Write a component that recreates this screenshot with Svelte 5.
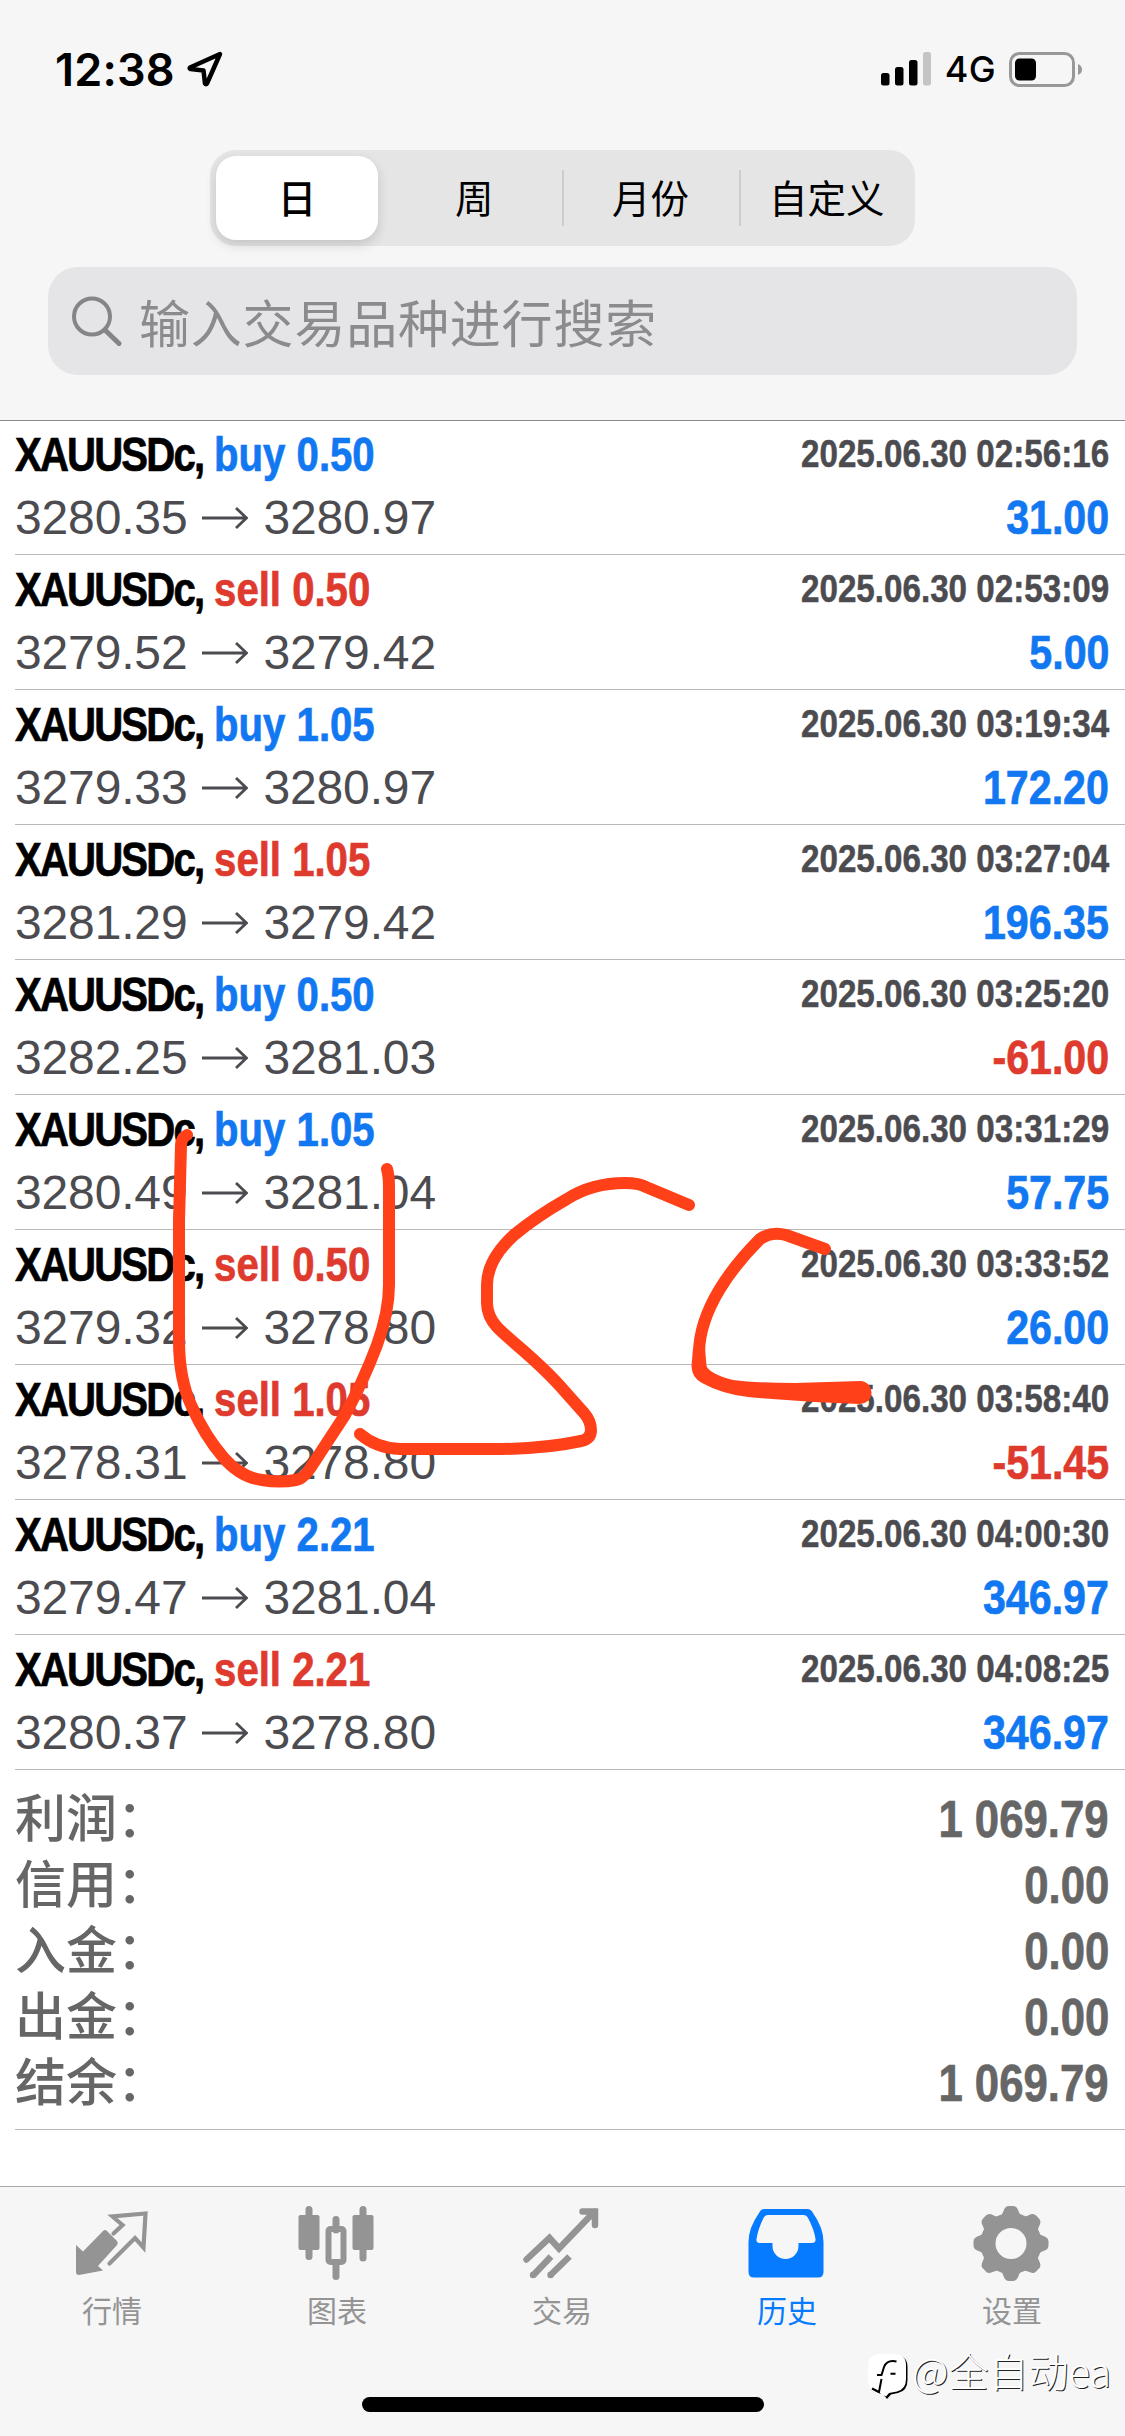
<script lang="ts">
	type Deal = {
		side: 'buy' | 'sell';
		volume: string;
		open: string;
		close: string;
		time: string;
		profit: string;
	};

	const periods = ['日', '周', '月份', '自定义'];
	let period = $state('日');

	const deals: Deal[] = [
		{ side: 'buy', volume: '0.50', open: '3280.35', close: '3280.97', time: '02:56:16', profit: '31.00' },
		{ side: 'sell', volume: '0.50', open: '3279.52', close: '3279.42', time: '02:53:09', profit: '5.00' },
		{ side: 'buy', volume: '1.05', open: '3279.33', close: '3280.97', time: '03:19:34', profit: '172.20' },
		{ side: 'sell', volume: '1.05', open: '3281.29', close: '3279.42', time: '03:27:04', profit: '196.35' },
		{ side: 'buy', volume: '0.50', open: '3282.25', close: '3281.03', time: '03:25:20', profit: '-61.00' },
		{ side: 'buy', volume: '1.05', open: '3280.49', close: '3281.04', time: '03:31:29', profit: '57.75' },
		{ side: 'sell', volume: '0.50', open: '3279.32', close: '3278.80', time: '03:33:52', profit: '26.00' },
		{ side: 'sell', volume: '1.05', open: '3278.31', close: '3278.80', time: '03:58:40', profit: '-51.45' },
		{ side: 'buy', volume: '2.21', open: '3279.47', close: '3281.04', time: '04:00:30', profit: '346.97' },
		{ side: 'sell', volume: '2.21', open: '3280.37', close: '3278.80', time: '04:08:25', profit: '346.97' }
	];

	const totals = [
		['利润：', '1 069.79'],
		['信用：', '0.00'],
		['入金：', '0.00'],
		['出金：', '0.00'],
		['结余：', '1 069.79']
	];

	const tabs = ['行情', '图表', '交易', '历史', '设置'];
	let tab = $state('历史');
</script>

<main>
	<header>
		<div class="status">
			<div class="clock">
				<span class="time">12:38</span>
				<svg width="38" height="38" viewBox="0 0 38 38">
					<path d="M34 4 L4 17.500 Q3 18.500 4.500 19 L17.500 20.500 L19 33.500 Q20 35 21 33.500 Z" fill="none" stroke="#000" stroke-width="4.500" stroke-linejoin="round" />
				</svg>
			</div>
			<div class="signal">
				<svg width="50" height="34" viewBox="0 0 50 34">
					<rect x="0" y="21" width="8.500" height="12.500" rx="2.500" />
					<rect x="14" y="15" width="8.500" height="18.500" rx="2.500" />
					<rect x="28" y="8" width="8.500" height="25.500" rx="2.500" />
					<rect x="42" y="0" width="8" height="33.500" rx="2.500" fill="#c4c4c4" />
				</svg>
				<span class="network">4G</span>
				<svg width="74" height="35" viewBox="0 0 74 35">
					<rect x="1.500" y="1.500" width="63" height="32" rx="9" fill="none" stroke="#989898" stroke-width="3" />
					<rect x="6" y="6.500" width="21" height="22" rx="4.500" />
					<path d="M69 12 Q73 13.500 73 17.500 Q73 21.500 69 23 Z" fill="#989898" />
				</svg>
			</div>
		</div>

		<div class="segments">
			{#each periods as name}
				<button class:selected={name === period} onclick={() => (period = name)}>{name}</button>
			{/each}
		</div>

		<div class="search">
			<svg width="50" height="50" viewBox="0 0 50 50">
				<circle cx="20" cy="20.500" r="18" fill="none" stroke="#858589" stroke-width="4" />
				<path d="M33 34 L47 47.500" stroke="#858589" stroke-width="5" stroke-linecap="round" />
			</svg>
			<span>输入交易品种进行搜索</span>
		</div>
	</header>

	<section class="deals">
		{#each deals as deal}
			<div class="deal">
				<div class="line top">
					<div class="title">
						<span class="symbol">XAUUSDc,</span>
						<span class={deal.side}>{deal.side} {deal.volume}</span>
					</div>
					<span class="date">2025.06.30 {deal.time}</span>
				</div>
				<div class="line">
					<div class="prices">
						<span>{deal.open}</span>
						<svg width="46" height="24" viewBox="0 0 46 24">
							<path d="M0 12 H44 M34 2 L44.500 12 L34 22" fill="none" stroke="#4c4c50" stroke-width="2.800" />
						</svg>
						<span>{deal.close}</span>
					</div>
					<span class="profit" class:loss={deal.profit.startsWith('-')}>{deal.profit}</span>
				</div>
			</div>
		{/each}
	</section>

	<section class="totals">
		{#each totals as [label, value]}
			<div class="total">
				<span>{label}</span>
				<span class="amount">{value}</span>
			</div>
		{/each}
	</section>

	<nav>
		{#each tabs as name, i}
			<button class="tab" class:active={name === tab} onclick={() => (tab = name)}>
				<svg width="80" height="80" viewBox="0 0 80 80">
					{#if i === 0}
						<path d="M4 43 L11 49.500 L31 29 Q33 27 35 29 L45 39 Q46.500 41 45 43 L26 64 L31 68.500 L7 73 Q4 73 4 70 Z" fill="currentColor" />
						<path d="M41.500 31.500 L50.500 23 L40.500 14.500 L73.500 11.500 L71.500 45.500 L63 36 L37.500 61.500" fill="none" stroke="currentColor" stroke-width="4.200" stroke-linecap="round" stroke-linejoin="miter" />
					{:else if i === 1}
						<rect x="1.500" y="13" width="21" height="35" rx="2" fill="currentColor" />
						<path d="M12 7.500 V54.500 M66 7.500 V56 M39 17.500 V28 M39 62 V74.500" stroke="currentColor" stroke-width="7" stroke-linecap="round" />
						<rect x="55.500" y="13" width="21" height="35" rx="2" fill="currentColor" />
						<rect x="31.500" y="27" width="15" height="33" rx="2" fill="none" stroke="currentColor" stroke-width="6" />
					{:else if i === 2}
						<path d="M4.500 57.500 L27.500 36 L37 46.500 L72.500 9.500 M60.500 9.500 H73 V23" fill="none" stroke="currentColor" stroke-width="6.500" stroke-linecap="round" />
						<path d="M11 73.500 L29 54.500 M28 73.500 L47.500 54.500" stroke="currentColor" stroke-width="6.500" />
						<circle cx="11" cy="73" r="3.200" fill="currentColor" />
						<circle cx="28.500" cy="73" r="3.200" fill="currentColor" />
					{:else if i === 3}
						<path fill-rule="evenodd" d="M17 7 H60 Q64 7 66 11 Q76.500 26 76.500 40 V70 Q76.500 75.500 71 75.500 H7 Q1.500 75.500 1.500 70 V40 Q1.500 26 12 11 Q14 7 17 7 Z M21 13 Q18 13 16.500 16 Q11 27 9.500 37 Q9 41 12.500 41 H25.500 V44 A13 13 0 0 0 51.500 44 V41 H65 Q69 41 68.500 37 Q67 27 61 16 Q59.500 13 56.500 13 Z" fill="currentColor" />
					{:else}
						<circle cx="39" cy="41.500" r="23" fill="none" stroke="currentColor" stroke-width="15" />
						{#each [0, 45, 90, 135, 180, 225, 270, 315] as angle}
							<path d="M25 17 Q30 14 31.500 9 Q33 4 37 4 H41 Q45 4 46.500 9 Q48 14 53 17 Z" fill="currentColor" transform="rotate({angle} 39 41.500)" />
						{/each}
					{/if}
				</svg>
				<span>{name}</span>
			</button>
		{/each}
	</nav>
	<div class="home-bar"></div>

	<div class="watermark">
		<svg width="44" height="50" viewBox="0 0 44 50">
			<path d="M13 5.500 H28 Q39.500 5.500 39.500 17 V30 Q39.500 41 30 43 L23 44.500 L19 49 L15 44 Q3 42 3 32 V17 Q3 5.500 13 5.500 Z" fill="#000" />
			<path d="M12 4 H26 Q38 4 38 15 V29 Q38 39 29 41.500 L21 43 L18 46.500 L10 42 Q0 39 0 30 V16 Q0 4 12 4 Z" fill="#fff" />
			<path d="M28.500 11.500 Q19 9.500 16 17 L13.500 25 H9 M13.500 29 L11 42 L4 38.500 M22.500 23.700 H27.500" fill="none" stroke="#000" stroke-width="2" />
		</svg>
		<span>@全自动ea</span>
	</div>

	<svg class="scribble" width="1125" height="2436" viewBox="0 0 1125 2436">
		<g fill="none" stroke="#ff4018" stroke-width="12" stroke-linecap="round" stroke-linejoin="round">
			<path d="M187 1135 Q181 1138 181 1146 L179 1220 V1340 Q179 1380 192 1407 Q205 1436 223 1457 Q240 1477 262 1480 Q280 1483 296 1480 Q304 1479 313 1464 L345 1415 Q363 1382 377 1345 Q389 1312 389 1285 V1187 Q389 1176 387 1169" />
			<path d="M689 1205 L646 1187 Q639 1183 625 1183 Q592 1183 567 1199 Q537 1216 514 1235 Q487 1260 487 1285 V1303 Q487 1316 497 1327 C508 1339 535 1358 560 1386 L584 1413 Q591 1421 591 1430 Q591 1439 581 1441 Q540 1450 480 1449 H400 Q376 1448 360 1434" />
			<path d="M825 1249 L786 1235 Q772 1231 760 1239 C733 1266 700 1308 699 1352" />
		</g>
		<path d="M693 1348 L691.500 1366 Q692 1378 702 1383 Q722 1394 748 1397 Q802 1402 859 1404 A11.500 11.500 0 0 0 861 1381 L795 1383 Q755 1383 733 1380 Q710 1374 706.500 1366 L705 1348 Z" fill="#ff4018" />
	</svg>
</main>

<style>
	:global(body) {
		background: #fff;
	}

	main {
		position: relative;
		width: 1125px;
		height: 2436px;
		overflow: hidden;
		background: #fff;
		font-family: 'Liberation Sans', 'Noto Sans CJK SC', sans-serif;
		display: flex;
		flex-direction: column;
	}

	button {
		border: 0;
		padding: 0;
		background: none;
		font: inherit;
		color: inherit;
	}

	header {
		box-sizing: border-box;
		height: 421px;
		flex: none;
		background: #f6f6f6;
		border-bottom: 1px solid #8a8a8c;
	}

	.status {
		height: 150px;
		box-sizing: border-box;
		padding: 50px 42px 0 55px;
		display: flex;
		justify-content: space-between;
		align-items: flex-start;
		font-family: Inter, sans-serif;
	}

	.clock,
	.signal {
		display: flex;
		align-items: center;
		height: 38px;
	}

	.time {
		font-size: 45px;
		font-weight: 600;
		letter-spacing: 0.2px;
		margin-right: 11px;
	}

	.network {
		font-size: 36px;
		font-weight: 500;
		letter-spacing: 0.3px;
		margin: 0 13px 0 14px;
	}

	.segments {
		width: 705px;
		height: 96px;
		margin: 0 auto;
		box-sizing: border-box;
		padding: 6px 0 6px 6px;
		border-radius: 26px;
		background: #e5e5e6;
		display: flex;
	}

	.segments button {
		flex: 1;
		position: relative;
		padding-bottom: 4px;
		font-size: 38.5px;
		color: #000;
	}

	.segments button.selected {
		flex: none;
		width: 162px;
		margin-right: 8px;
		border-radius: 20px;
		background: #fff;
		box-shadow: 0 5px 12px rgba(0, 0, 0, 0.14);
		font-weight: 500;
	}

	.segments button:nth-child(n + 3)::before {
		content: '';
		position: absolute;
		left: 0;
		top: 14px;
		bottom: 14px;
		width: 2px;
		background: #cdcdcf;
	}

	.search {
		height: 108px;
		margin: 21px 48px 0;
		box-sizing: border-box;
		padding: 0 23px 1px 24px;
		border-radius: 30px;
		background: #e5e5e7;
		display: flex;
		align-items: center;
		gap: 17px;
		font-size: 51px;
		letter-spacing: 0.8px;
		color: #8b8b8f;
	}

	.deals {
		flex: none;
		margin-top: -1px;
	}

	.deal {
		height: 135px;
		box-sizing: border-box;
		margin-left: 15px;
		padding-right: 16px;
		border-bottom: 1px solid #b8b8bb;
	}

	.line {
		display: flex;
		justify-content: space-between;
		line-height: 64px;
	}

	.top {
		height: 66px;
		padding-top: 3px;
		box-sizing: border-box;
	}

	/* condensed bold face */
	.title,
	.date,
	.profit,
	.amount {
		font-weight: 700;
		transform: scaleX(0.857);
		transform-origin: right;
		-webkit-text-stroke: 0.7px currentColor;
	}

	.title {
		font-size: 48px;
		display: flex;
		gap: 13px;
		transform: scaleX(0.836);
		transform-origin: left;
	}

	.symbol {
		color: #000;
		letter-spacing: -2.2px;
	}

	.buy,
	.profit {
		color: #1178f2;
	}

	.sell,
	.loss {
		color: #de3a2d;
	}

	.date {
		font-size: 39px;
		line-height: 62px;
		color: #4c4c50;
		transform: scaleX(0.851);
		-webkit-text-stroke-width: 0.5px;
	}

	.prices {
		display: flex;
		align-items: center;
		gap: 15px;
		font-size: 48px;
		letter-spacing: -0.15px;
		color: #4c4c50;
	}

	.profit {
		font-size: 48px;
	}

	.totals {
		height: 360px;
		flex: none;
		box-sizing: border-box;
		margin-left: 15px;
		padding: 17px 16px 0 0;
		border-bottom: 1px solid #b8b8bb;
		color: #666;
	}

	.total {
		height: 66px;
		line-height: 66px;
		display: flex;
		justify-content: space-between;
		font-size: 51px;
		font-weight: 500;
	}

	nav {
		height: 250px;
		box-sizing: border-box;
		flex: none;
		margin-top: 56px;
		border-top: 1px solid #a8a8aa;
		background: #f6f6f6;
		display: flex;
	}

	.tab {
		flex: 1;
		display: flex;
		flex-direction: column;
		align-items: center;
		padding: 15px 1px 0 0;
		font-size: 30px;
		line-height: 44px;
		color: #949494;
	}

	.tab span {
		margin-top: 8px;
	}

	.active {
		color: #067bff;
	}

	.home-bar {
		position: absolute;
		left: 362px;
		top: 2397px;
		width: 402px;
		height: 15px;
		border-radius: 8px;
		background: #000;
	}

	.watermark {
		position: absolute;
		left: 868px;
		top: 2350px;
		display: flex;
		font-family: 'Noto Sans CJK SC', sans-serif;
		font-size: 40px;
		font-weight: 300;
		line-height: 41px;
		white-space: nowrap;
		color: #fff;
		text-shadow: 1px 1px 0 #222;
	}

	.scribble {
		position: absolute;
		left: 0;
		top: 0;
		pointer-events: none;
	}
</style>
